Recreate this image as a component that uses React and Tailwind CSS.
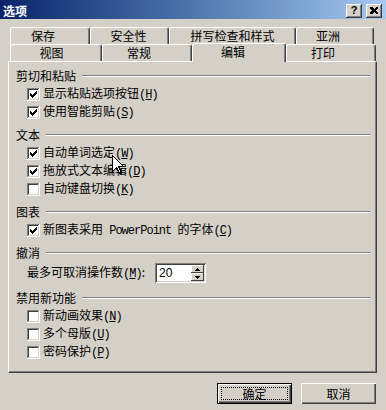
import React from "react";

function Box({ checked }) {
  return (
    <svg width="13" height="13" viewBox="0 0 13 13" shapeRendering="crispEdges" className="shrink-0">
      <rect x="0" y="0" width="13" height="13" fill="#fff" />
      <path d="M0 0h12v1H1v11H0z" fill="#808080" />
      <path d="M1 1h10v1H2v9H1z" fill="#404040" />
      <path d="M12 0h1v13H0v-1h12z" fill="#fff" />
      <path d="M11 1h1v11H1v-1h10z" fill="#d4d0c8" />
      {checked && (
        <path
          d="M3 5h1v3H3zM4 6h1v3H4zM5 7h1v3H5zM6 6h1v3H6zM7 5h1v3H7zM8 4h1v3H8zM9 3h1v3H9z"
          fill="#000"
        />
      )}
    </svg>
  );
}

function Acc({ k }) {
  return (
    <span className="font-['Liberation_Mono',monospace] text-[12px] tracking-[-1px]">
      (<u>{k}</u>)
    </span>
  );
}

function Header({ children }) {
  return (
    <div className="h-[19px] flex items-center">
      <span className="whitespace-nowrap">{children}</span>
      <div className="flex-1 ml-[6px] h-[2px] border-t border-b border-t-[#808080] border-b-white" />
    </div>
  );
}

function Item({ checked, children }) {
  return (
    <div className="h-[18px] flex items-center pl-[11px]">
      <Box checked={checked} />
      <span className="ml-[3px] whitespace-nowrap">{children}</span>
    </div>
  );
}

const row1 = [
  ["保存", "w-[80px] pr-[14px]"],
  ["安全性", "w-[79px] pr-[2px]"],
  ["拼写检查和样式", "w-[127px]"],
  ["亚洲", "w-[78px] pr-[14px]"],
];
const row2 = [
  ["视图", "w-[92px] pr-[9px]", false],
  ["常规", "w-[90px] pr-[16px]", false],
  ["编辑", "w-[94px] pr-[12px]", true],
  ["打印", "w-[90px] pr-[16px]", false],
];

function Tab({ label, cls, selected }) {
  if (selected) {
    return (
      <div
        className={`relative z-10 -mt-[1px] h-[19px] pb-[3px] flex items-center justify-center bg-[#d4d0c8] border-t border-l border-white border-r border-r-[#404040] rounded-t-[3px] shadow-[inset_-1px_0_#808080] ${cls}`}
      >
        {label}
      </div>
    );
  }
  return (
    <div
      className={`h-[17px] flex items-center justify-center border-t border-l border-white border-r border-r-[#404040] rounded-t-[3px] shadow-[inset_-1px_0_#808080] ${cls}`}
    >
      {label}
    </div>
  );
}

export default function App() {
  return (
    <div className="relative w-[386px] h-[410px] overflow-hidden bg-[#d4d0c8] text-black text-[12px] leading-none font-['Noto_Sans_CJK_SC','Liberation_Sans',sans-serif]">
      {/* title bar */}
      <div className="h-[19px] pt-[2px] flex items-center bg-linear-to-r from-[#0a246a] to-[#a6caf0] pl-[3px] pr-[4px]">
        <span className="text-white font-bold text-[12px]">选项</span>
        <div className="flex-1" />
        <div className="w-[16px] h-[14px] flex items-center justify-center bg-[#d4d0c8] shadow-[inset_-1px_-1px_#404040,inset_1px_1px_#fff,inset_-2px_-2px_#808080]">
          <span className="font-['Liberation_Sans',sans-serif] font-bold text-[11px] leading-none">?</span>
        </div>
        <div className="ml-[4px] w-[16px] h-[14px] flex items-center justify-center bg-[#d4d0c8] shadow-[inset_-1px_-1px_#404040,inset_1px_1px_#fff,inset_-2px_-2px_#808080]">
          <svg width="8" height="7" viewBox="0 0 8 7" shapeRendering="crispEdges">
            <path d="M0 0h2l2 2 2-2h2v1L6 3.5 8 6v1H6L4 5 2 7H0V6l2-2.5L0 1z" fill="#000" />
          </svg>
        </div>
      </div>

      {/* tabs */}
      <div className="mt-[8px] ml-[10px] flex">
        {row1.map(([l, c]) => (
          <Tab key={l} label={l} cls={c} />
        ))}
      </div>
      <div className="ml-[10px] flex items-start h-[17px]">
        {row2.map(([l, c, s]) => (
          <Tab key={l} label={l} cls={c} selected={s} />
        ))}
      </div>

      {/* panel */}
      <div className="ml-[8px] w-[369px] h-[312px] border-t border-l border-white border-r border-b border-r-[#404040] border-b-[#404040] shadow-[inset_-1px_-1px_#808080] pt-[4px] pl-[7px] pr-[6px]">
        <Header>剪切和粘贴</Header>
        <Item checked>显示粘贴选项按钮<Acc k="H" /></Item>
        <Item checked>使用智能剪贴<Acc k="S" /></Item>

        <div className="mt-[4px]">
          <Header>文本</Header>
          <Item checked>自动单词选定<Acc k="W" /></Item>
          <Item checked>拖放式文本编辑<Acc k="D" /></Item>
          <Item>自动键盘切换<Acc k="K" /></Item>
        </div>

        <div className="mt-[4px]">
          <Header>图表</Header>
          <Item checked>
            新图表采用
            <span className="font-['Liberation_Mono',monospace] text-[12px] tracking-[-1px]"> PowerPoint </span>
            的字体<Acc k="C" />
          </Item>
        </div>

        <div className="mt-[4px]">
          <Header>撤消</Header>
          <div className="h-[22px] flex items-center pl-[11px]">
            <span className="w-[128px] whitespace-nowrap">
              最多可取消操作数<Acc k="M" />:
            </span>
            <div className="w-[51px] h-[20px] flex items-center bg-white shadow-[inset_1px_1px_#808080,inset_-1px_-1px_#fff,inset_2px_2px_#404040,inset_-2px_-2px_#d4d0c8] pl-[4px] pr-[2px]">
              <span className="flex-1 font-['Liberation_Sans',sans-serif] text-[12px]">20</span>
              <div className="flex flex-col w-[13px]">
                <div className="h-[8px] flex items-center justify-center bg-[#d4d0c8] shadow-[inset_-1px_-1px_#404040,inset_1px_1px_#fff]">
                  <svg width="5" height="3" viewBox="0 0 5 3" shapeRendering="crispEdges">
                    <path d="M2 0h1v1h1v1h1v1H0V2h1V1h1z" fill="#000" />
                  </svg>
                </div>
                <div className="h-[8px] flex items-center justify-center bg-[#d4d0c8] shadow-[inset_-1px_-1px_#404040,inset_1px_1px_#fff]">
                  <svg width="5" height="3" viewBox="0 0 5 3" shapeRendering="crispEdges">
                    <path d="M0 0h5v1H4v1H3v1H2V2H1V1H0z" fill="#000" />
                  </svg>
                </div>
              </div>
            </div>
          </div>
        </div>

        <div className="mt-[4px]">
          <Header>禁用新功能</Header>
          <Item>新动画效果<Acc k="N" /></Item>
          <Item>多个母版<Acc k="U" /></Item>
          <Item>密码保护<Acc k="P" /></Item>
        </div>
      </div>

      {/* buttons */}
      <div className="mt-[10px] flex justify-end gap-[9px] pr-[10px]">
        <div className="w-[75px] h-[21px] border border-black bg-[#d4d0c8] shadow-[inset_1px_1px_#fff,inset_-1px_-1px_#404040,inset_-2px_-2px_#808080] p-[3px] flex">
          <div className="flex-1 border border-dotted border-black flex items-center justify-center">确定</div>
        </div>
        <div className="w-[75px] h-[21px] bg-[#d4d0c8] shadow-[inset_1px_1px_#fff,inset_-1px_-1px_#404040,inset_-2px_-2px_#808080] flex items-center justify-center">
          取消
        </div>
      </div>

      {/* mouse cursor */}
      <svg
        className="absolute left-[112px] top-[155px]"
        width="12"
        height="19"
        viewBox="0 0 12 19"
        shapeRendering="crispEdges"
      >
        <path d="M0.5 0.5V16.5L4.5 12.5L7.5 18.5L9.5 17.5L6.5 11.5H11.5Z" fill="#fff" stroke="#000" strokeWidth="1" />
      </svg>
    </div>
  );
}
